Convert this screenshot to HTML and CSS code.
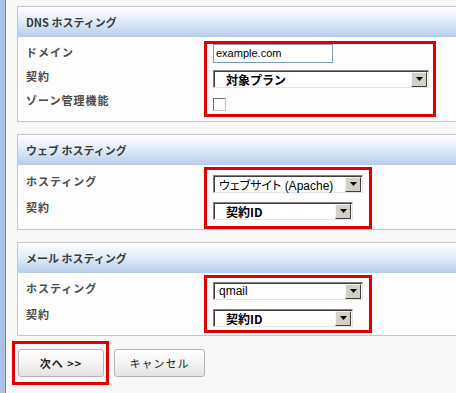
FILE: index.html
```html
<!DOCTYPE html>
<html lang="ja">
<head>
    <meta charset="UTF-8">
    <title>ホスティング設定</title>
    <link rel="stylesheet" href="styles.css">
</head>
<body>
    <div class="frame">
        <div class="rail"></div>
        <div class="main">
            <!-- DNS -->
            <section class="panel">
                <div class="panel-head">DNS ホスティング</div>
                <div class="panel-body body-dns">
                    <div class="labels">
                        <div>ドメイン</div>
                        <div>契約</div>
                        <div>ゾーン管理機能</div>
                    </div>
                    <div class="mark fields-dns">
                        <div class="textbox">example.com</div>
                        <div class="combo combo-wide">
                            <span class="combo-text strong">対象プラン</span>
                            <span class="combo-arrow"><svg width="7" height="4" viewBox="0 0 7 4"><polygon points="0,0 7,0 3.5,4" fill="#000"/></svg></span>
                        </div>
                        <div class="checkbox"></div>
                    </div>
                </div>
            </section>

            <!-- ウェブ -->
            <section class="panel">
                <div class="panel-head">ウェブ ホスティング</div>
                <div class="panel-body body-web">
                    <div class="labels">
                        <div>ホスティング</div>
                        <div>契約</div>
                    </div>
                    <div class="mark fields-web">
                        <div class="combo combo-mid">
                            <span class="combo-text">ウェブサイト (Apache)</span>
                            <span class="combo-arrow"><svg width="7" height="4" viewBox="0 0 7 4"><polygon points="0,0 7,0 3.5,4" fill="#000"/></svg></span>
                        </div>
                        <div class="combo combo-short">
                            <span class="combo-text strong">契約ID</span>
                            <span class="combo-arrow"><svg width="7" height="4" viewBox="0 0 7 4"><polygon points="0,0 7,0 3.5,4" fill="#000"/></svg></span>
                        </div>
                    </div>
                </div>
            </section>

            <!-- メール -->
            <section class="panel">
                <div class="panel-head">メール ホスティング</div>
                <div class="panel-body body-mail">
                    <div class="labels">
                        <div>ホスティング</div>
                        <div>契約</div>
                    </div>
                    <div class="mark fields-mail">
                        <div class="combo combo-mid">
                            <span class="combo-text">qmail</span>
                            <span class="combo-arrow"><svg width="7" height="4" viewBox="0 0 7 4"><polygon points="0,0 7,0 3.5,4" fill="#000"/></svg></span>
                        </div>
                        <div class="combo combo-short">
                            <span class="combo-text strong">契約ID</span>
                            <span class="combo-arrow"><svg width="7" height="4" viewBox="0 0 7 4"><polygon points="0,0 7,0 3.5,4" fill="#000"/></svg></span>
                        </div>
                    </div>
                </div>
            </section>

            <div class="actions">
                <div class="mark mark-btn">
                    <button class="btn btn-next">次へ &gt;&gt;</button>
                </div>
                <button class="btn btn-cancel">キャンセル</button>
            </div>
        </div>
    </div>
</body>
</html>
```

FILE: styles.css
```css
/* 全体 */
body {
    margin: 0;
    background-color: #f8f8f8;
    font-family: "Noto Sans CJK JP", "Liberation Sans", sans-serif;
    font-size: 11px;
    color: #333;
    overflow: hidden;
}

.frame {
    display: flex;
    min-height: 393px;
}

.rail {
    width: 5px;
    flex-shrink: 0;
    background-color: #a9c4e8;
    border-right: 1px solid #6c86aa;
}

.main {
    flex: 1;
    padding: 6px 0 0 11px;
    margin-right: -20px;
}

/* パネル */
.panel {
    background-color: #fdfdfd;
    border: 1px solid #c6c6c6;
    margin-bottom: 12px;
}

.panel-head {
    height: 30px;
    line-height: 30px;
    padding-left: 8px;
    font-weight: bold;
    color: #3a3a3a;
    background: linear-gradient(to bottom, #fefefe 0%, #e4edf8 45%, #b6cde9 100%);
}

.panel-body {
    display: flex;
    align-items: flex-start;
}

.body-dns {
    padding: 4px 0 4px 0;
}

.body-web {
    padding: 2px 0 0 0;
}

.body-mail {
    padding: 2px 0 2px 0;
}

.labels {
    width: 178px;
    padding-left: 8px;
    font-weight: bold;
    letter-spacing: 1px;
    color: #4a4a4a;
}

.body-dns .labels {
    margin-top: -1px;
    line-height: 24px;
}

.body-web .labels {
    margin-top: 1px;
    line-height: 26px;
}

.body-mail .labels {
    line-height: 26px;
}

/* 赤枠 */
.mark {
    border: 3px solid #e00000;
    display: flex;
    flex-direction: column;
    align-items: flex-start;
}

.fields-dns {
    width: 216px;
    padding: 0 4px 3px 6px;
}

.fields-web {
    width: 150px;
    padding: 5px 6px 6px 6px;
}

.fields-mail {
    width: 150px;
    padding: 4px 6px 3px 6px;
}

/* 入力欄 */
.textbox {
    box-sizing: border-box;
    width: 120px;
    height: 19px;
    line-height: 17px;
    padding-left: 2px;
    border: 1px solid #7f9db9;
    background-color: #fff;
    font-family: "Liberation Sans", sans-serif;
    font-size: 11px;
    color: #000;
    margin-bottom: 7px;
}

.combo {
    box-sizing: border-box;
    display: flex;
    align-items: center;
    height: 18px;
    background-color: #fff;
    border: 1px solid;
    border-color: #808080 #e4e4e4 #e4e4e4 #808080;
    box-shadow: inset 1px 1px 0 #404040;
}

.combo-wide {
    width: 216px;
    margin-bottom: 10px;
}

.combo-mid {
    width: 150px;
    margin-bottom: 9px;
}

.combo-short {
    width: 140px;
}

.combo-text {
    flex: 1;
    padding-left: 5px;
    font-family: "Liberation Sans", "Noto Sans CJK JP", sans-serif;
    font-size: 12px;
    font-feature-settings: "palt";
    color: #000;
    white-space: nowrap;
    overflow: hidden;
}

.combo-text.strong {
    padding-left: 12px;
    font-family: "Noto Sans CJK JP", "Liberation Sans", sans-serif;
    font-size: 12px;
    font-weight: bold;
    font-feature-settings: normal;
}

.combo-arrow {
    box-sizing: border-box;
    width: 16px;
    height: 15px;
    margin-right: 1px;
    display: flex;
    align-items: center;
    justify-content: center;
    background-color: #d4d0c8;
    border: 1px solid;
    border-color: #f4f4f4 #404040 #404040 #f4f4f4;
}

.checkbox {
    width: 11px;
    height: 11px;
    border: 1px solid;
    border-color: #707070 #c8c8c8 #c8c8c8 #707070;
    background-color: #fff;
}

/* ボタン */
.actions {
    display: flex;
    align-items: center;
    margin: -7px 0 0 -5px;
}

.mark-btn {
    padding: 5px 2px 5px 3px;
    margin-right: 5px;
}

.btn {
    width: 86px;
    height: 28px;
    border: 1px solid #b4b4b4;
    border-radius: 3px;
    background: linear-gradient(to bottom, #ffffff 0%, #f4f4f4 50%, #e2e2e2 100%);
    font-family: "Noto Sans CJK JP", sans-serif;
    font-size: 11px;
    color: #222;
    padding: 0;
}

.btn-next {
    font-weight: bold;
    letter-spacing: 1px;
}

.btn-cancel {
    width: 91px;
    letter-spacing: 1px;
}
```
